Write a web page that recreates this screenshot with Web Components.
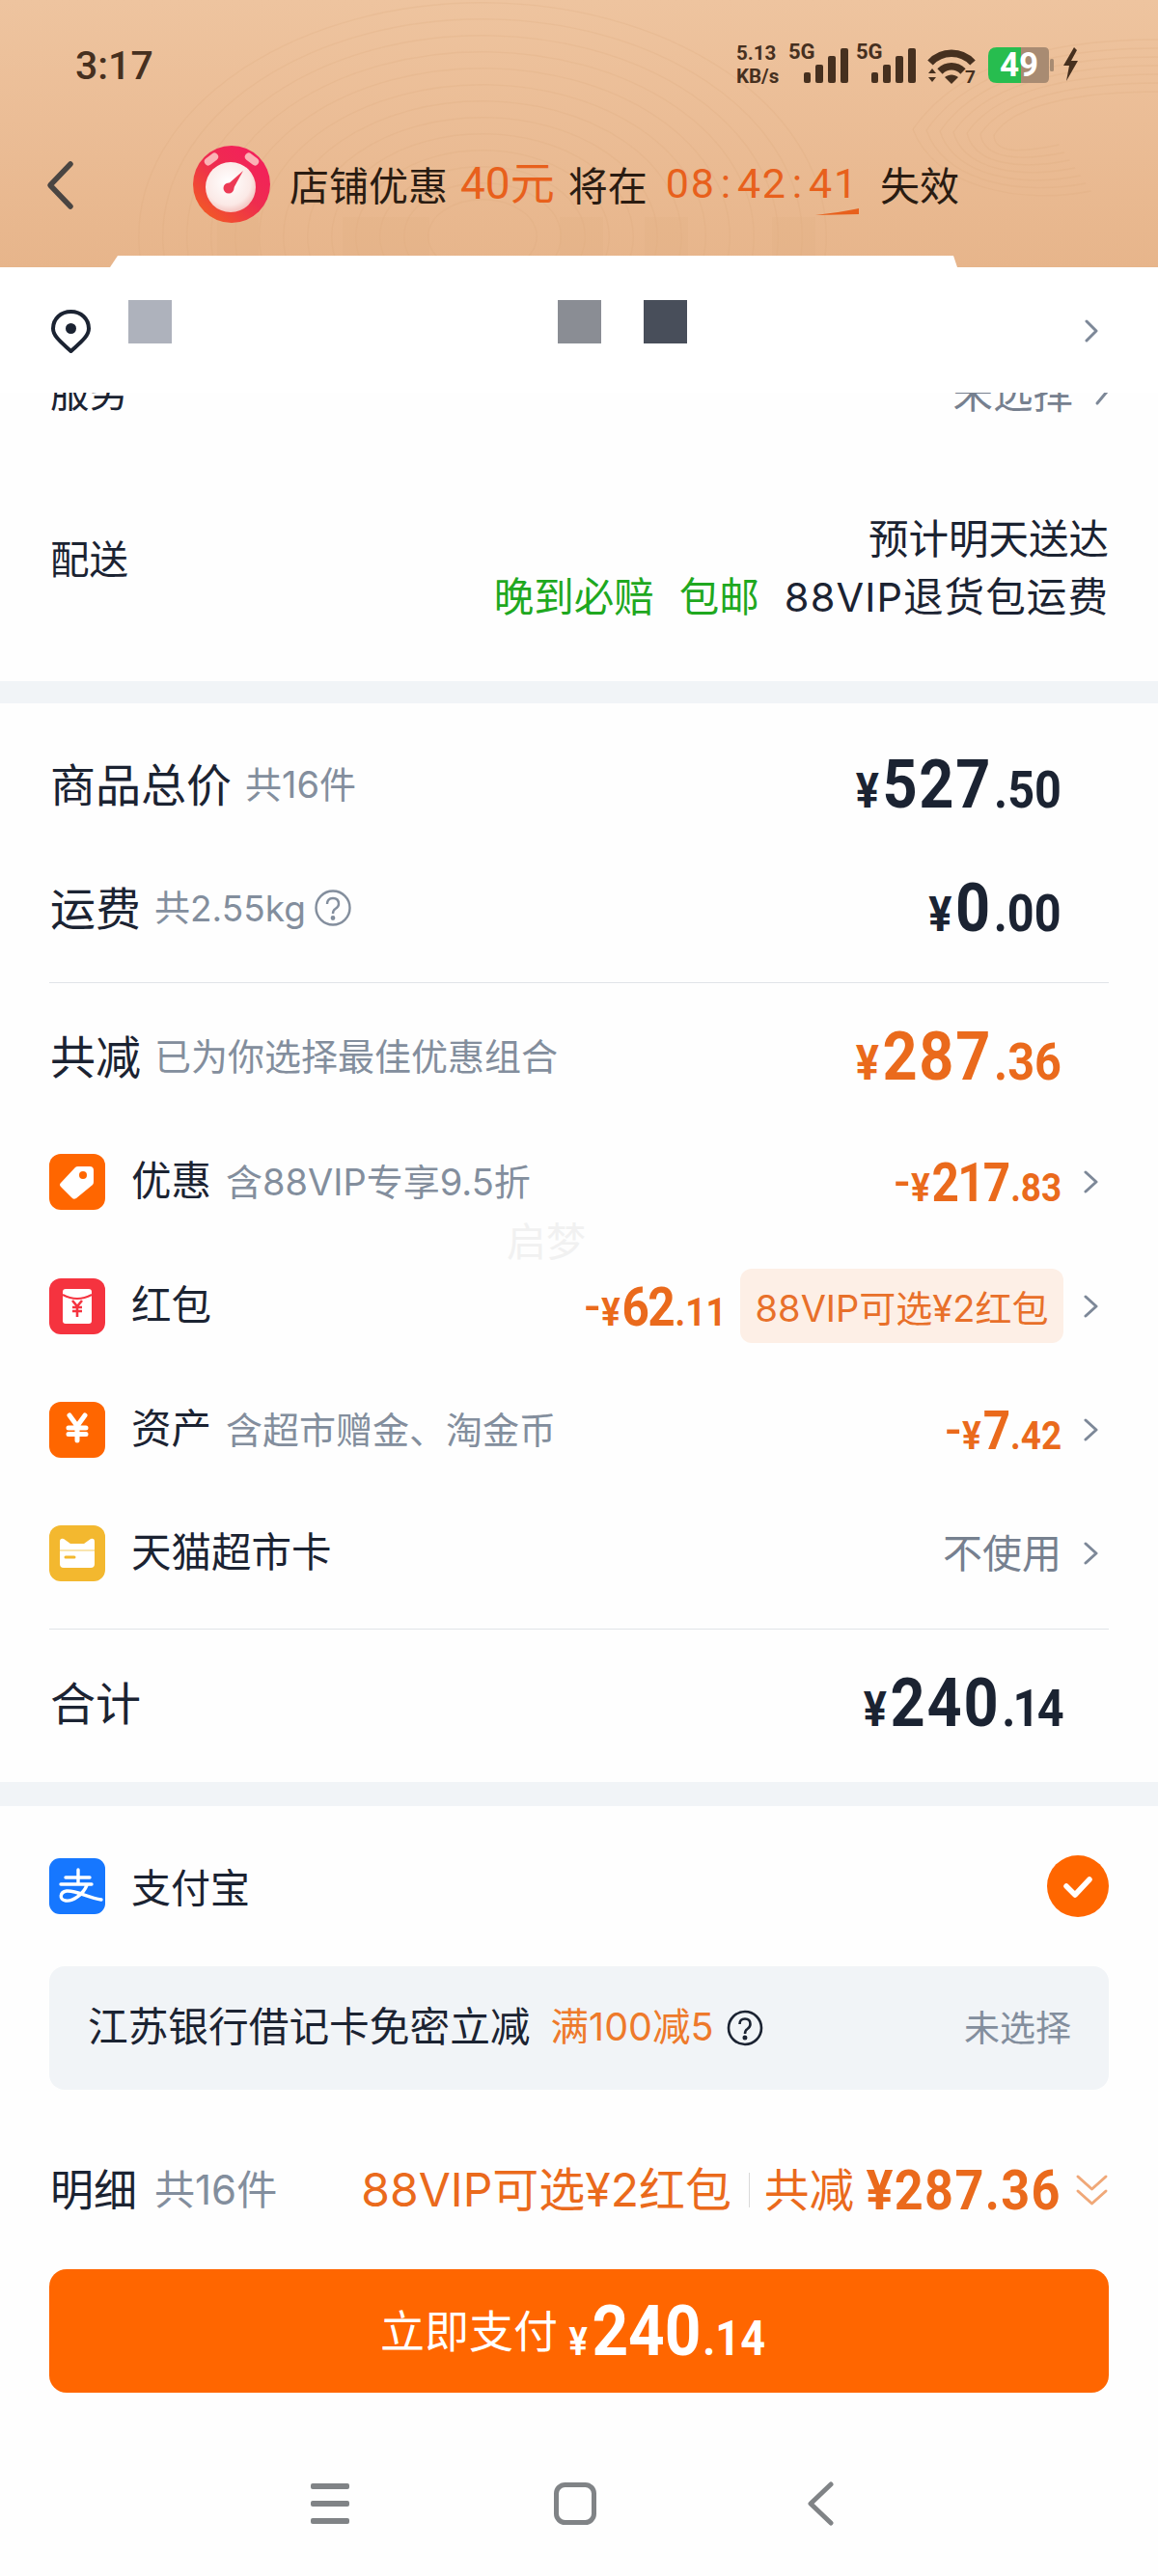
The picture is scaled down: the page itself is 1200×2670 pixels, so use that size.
<!DOCTYPE html>
<html lang="zh">
<head>
<meta charset="utf-8">
<title>确认订单</title>
<style>
  html, body { margin: 0; padding: 0; background: #fefefe; }
  body {
    width: 1200px;
    height: 2670px;
    overflow: hidden;
    font-family: Inter, "Noto Sans CJK SC", sans-serif;
    color: #1b2332;
    display: flex;
    flex-direction: column;
  }
</style>
</head>
<body>
  <top-header></top-header>
  <address-bar></address-bar>
  <delivery-section></delivery-section>
  <gap-band></gap-band>

  <price-section>
    <fee-row label="商品总价" sub="共16件" big>
      <money-amount sym="¥" int="527" dec=".50" size="lg" slot="value"></money-amount>
    </fee-row>
    <fee-row label="运费" sub="共2.55kg" subsize="37" help>
      <money-amount sym="¥" int="0" dec=".00" size="lg" slot="value"></money-amount>
    </fee-row>
    <hr-line style="margin:13px 0 12px"></hr-line>
    <fee-row label="共减" sub="已为你选择最佳优惠组合" style="margin-bottom:2px">
      <money-amount sym="¥" int="287" dec=".36" size="lg" orange slot="value"></money-amount>
    </fee-row>
    <fee-row label="优惠" sub="含88VIP专享9.5折" arrow icon="tag">
      <money-amount minus sym="¥" int="217" dec=".83" size="md" orange slot="value"></money-amount>
    </fee-row>
    <fee-row label="红包" arrow icon="packet" style="margin-top:1px">
      <money-amount minus sym="¥" int="62" dec=".11" size="md" orange slot="value"></money-amount>
      <vip-tag slot="value">88VIP可选¥2红包</vip-tag>
    </fee-row>
    <fee-row label="资产" sub="含超市赠金、淘金币" arrow icon="asset">
      <money-amount minus sym="¥" int="7" dec=".42" size="md" orange slot="value"></money-amount>
    </fee-row>
    <fee-row label="天猫超市卡" arrow icon="card">
      <span slot="value" style="font-size:41px;color:#76808f;line-height:1">不使用</span>
    </fee-row>
    <hr-line style="margin:14px 0 12px"></hr-line>
    <fee-row label="合计" big>
      <money-amount sym="¥" int="240" dec=".14" size="lg" tight slot="value"></money-amount>
    </fee-row>
  </price-section>

  <gap-band style="height:25px"></gap-band>

  <pay-option></pay-option>
  <bank-offer></bank-offer>
  <detail-bar></detail-bar>
  <pay-button></pay-button>
  <nav-keys></nav-keys>

<script>
const NUM_FONT = 'Roboto, sans-serif';

class TopHeader extends HTMLElement {
  constructor() {
    super();
    this.attachShadow({ mode: "open" });
  }

  connectedCallback() {
    const bars = (x) => `
      <rect x="${x}" y="25" width="7" height="11" rx="2"/>
      <rect x="${x + 12}" y="17" width="8" height="19" rx="2"/>
      <rect x="${x + 25}" y="8" width="8" height="28" rx="2"/>
      <rect x="${x + 38}" y="0" width="8" height="36" rx="2"/>`;

    // faint concentric lines of the header art
    let rings = "";
    for (let i = 0; i < 13; i++) {
      const r = 45 + i * 20;
      rings += `<ellipse cx="500" cy="245" rx="${r * 1.25}" ry="${r * 0.85}"/>`;
    }
    for (let i = 0; i < 7; i++) {
      const r = 30 + i * 22;
      rings += `<path d="M1200 ${95 - i * 9}C${1120 - i * 8} ${95 - i * 9} ${1050 - i * 10} ${108 - i * 6} ${1030 - i * 14} ${140 - i}"/>`;
      rings += `<path d="M${1030 - i * 14} ${140 - i}C${1030 - i * 10} ${160 + i * 6} ${1060} ${158 + i * 9} ${1090 + r / 4} ${150 + i * 8}"/>`;
    }

    this.shadowRoot.innerHTML = `
      <style>
        :host {
          display: block;
          position: relative;
          height: 277px;
          background: linear-gradient(180deg, #eec49f 0%, #ebbd96 45%, #e7b58b 100%);
          overflow: hidden;
          color: #46301f;
        }
        .rings { position: absolute; left: 0; top: 0; }
        .status {
          position: relative;
          height: 136px;
          display: flex;
          align-items: center;
          padding: 0 82px 0 78px;
          box-sizing: border-box;
          justify-content: space-between;
        }
        .time { font: 500 41px/1 Roboto, sans-serif; }
        .icons { display: flex; align-items: flex-start; height: 38px; }
        .speed {
          font: 700 20.500px/24px Roboto, sans-serif;
          width: 54px;
          margin-top: -6px;
        }
        .speed div { height: 24px; }
        .sig { position: relative; width: 70px; height: 38px; }
        .sig b {
          position: absolute;
          left: 0;
          top: -5px;
          font: 700 22px/20px Roboto, sans-serif;
        }
        .sig svg { position: absolute; left: 16px; top: 1px; }
        .wifi { position: relative; width: 50px; height: 38px; margin-left: 4px; }
        .wifi b {
          position: absolute;
          right: 0;
          bottom: -1px;
          font: 700 19px/17px Roboto, sans-serif;
        }
        .batt {
          position: relative;
          width: 68px;
          height: 37px;
          margin-left: 13px;
          font: 700 35px/37px Roboto, sans-serif;
          color: #fff;
          text-align: center;
        }
        .batt svg { position: absolute; left: 0; top: 0; }
        .batt span { position: relative; margin-left: -4px; }
        .bolt { margin-left: 9px; }
        .title {
          position: relative;
          height: 108px;
          display: flex;
          align-items: center;
          font-size: 41px;
          color: #2a1c12;
        }
        .back { position: absolute; left: 46px; top: 30px; }
        .clock { position: absolute; left: 199px; top: 14px; }
        .words {
          margin-left: 300px;
          display: flex;
          align-items: center;
          white-space: nowrap;
          line-height: 1;
          font-family: "Noto Sans CJK SC", sans-serif;
        }
        .o { color: #e8601c; }
        .off { font-size: 46px; font-family: Roboto, "Noto Sans CJK SC", sans-serif; }
        .cd { font-family: Roboto, sans-serif; font-size: 43px; letter-spacing: 1.800px; }
        .cd i { font-style: normal; margin: 0 5px; }
        .swoosh { position: absolute; left: 845px; top: 80px; }
        .bump {
          position: absolute;
          left: 114px;
          top: 265px;
          width: 878px;
          height: 12px;
          background: #fff;
          clip-path: polygon(8px 0, calc(100% - 4px) 0, 100% 100%, 0 100%);
        }
      </style>
      <svg class="rings" width="1200" height="277" fill="none" stroke="#dca97d" stroke-opacity=".22" stroke-width="1.300">
        ${rings}
        <g fill="#e3ad80" fill-opacity=".2" stroke="none">
          <rect x="225" y="225" width="43" height="40"/>
          <rect x="355" y="225" width="90" height="40"/>
          <rect x="580" y="225" width="45" height="40"/>
          <rect x="668" y="225" width="45" height="40"/>
          <rect x="800" y="225" width="45" height="40"/>
        </g>
      </svg>
      <div class="status">
        <span class="time">3:17</span>
        <div class="icons">
          <div class="speed"><div>5.13</div><div>KB/s</div></div>
          <div class="sig"><b>5G</b>
            <svg width="48" height="37" fill="#46301f">${bars(0)}</svg>
          </div>
          <div class="sig"><b>5G</b>
            <svg width="48" height="37" fill="#46301f">${bars(0)}</svg>
          </div>
          <div class="wifi">
            <svg width="50" height="38" viewBox="0 0 50 38" fill="none" stroke="#46301f" stroke-width="7.500">
              <path d="M3 16C15 3 35 3 47 16"/>
              <path d="M13 25C20 18 30 18 37 25"/>
              <path d="M18 31L25 38L32 31C28 27.500 22 27.500 18 31Z" fill="#46301f" stroke="none"/>
              <path d="M1 27L5 22L9 27ZM1 31L5 36L9 31Z" fill="#46301f" stroke="none"/>
            </svg>
            <b>7</b>
          </div>
          <div class="batt">
            <svg width="68" height="37" viewBox="0 0 68 37">
              <path d="M34 0H58Q63 0 63 5V32Q63 37 58 37H34Z" fill="#a88b72"/>
              <rect x="64" y="12" width="4" height="13" rx="1.500" fill="#a88b72"/>
              <path d="M34 0H9Q0 0 0 9V28Q0 37 9 37H34Z" fill="#27bd4f"/>
            </svg>
            <span>49</span>
          </div>
          <svg class="bolt" width="17" height="35" viewBox="0 0 17 35" fill="#46301f">
            <path d="M12 0L1 19H7L4 35L16 14H9L15 3Z"/>
          </svg>
        </div>
      </div>
      <div class="title">
        <svg class="back" width="32" height="52" viewBox="0 0 32 52" fill="none" stroke="#4a4542" stroke-width="5.500" stroke-linecap="round" stroke-linejoin="round">
          <path d="M27 4L6 26L27 48"/>
        </svg>
        <svg class="clock" width="82" height="82" viewBox="0 0 82 82">
          <defs>
            <linearGradient id="cg" x1="0.1" y1="1" x2="0.9" y2="0.1">
              <stop offset="0" stop-color="#f2601f"/><stop offset=".55" stop-color="#ee2c4f"/><stop offset="1" stop-color="#f41f5c"/>
            </linearGradient>
            <radialGradient id="cf" cx=".45" cy=".4" r=".65">
              <stop offset="0" stop-color="#fff"/><stop offset=".7" stop-color="#fbe9e6"/><stop offset="1" stop-color="#f1b9b4"/>
            </radialGradient>
          </defs>
          <circle cx="41" cy="41" r="40" fill="url(#cg)"/>
          <rect x="12" y="11" width="16" height="8" rx="4" transform="rotate(-38 20 15)" fill="#fbb2b5"/>
          <rect x="54" y="11" width="16" height="8" rx="4" transform="rotate(38 62 15)" fill="#fbb2b5"/>
          <circle cx="40" cy="44" r="26" fill="url(#cf)"/>
          <path d="M36 42L53 27L42 47Z" fill="#ec3a55"/>
          <circle cx="38" cy="45" r="5.500" fill="#ec3a55"/>
        </svg>
        <div class="words">
          <span>店铺优惠</span>
          <span class="o off" style="margin:0 14px 0 13px">40元</span>
          <span>将在</span>
          <span class="o cd" style="margin:0 22px 0 19px">08<i>:</i>42<i>:</i>41</span>
          <span>失效</span>
        </div>
        <svg class="swoosh" width="46" height="7"><path d="M0 7C15 5 32 3 45 0V6Z" fill="#e8601c"/></svg>
      </div>
      <div class="bump"></div>
    `;
  }
}

class AddressBar extends HTMLElement {
  constructor() {
    super();
    this.attachShadow({ mode: "open" });
  }

  connectedCallback() {
    this.shadowRoot.innerHTML = `
      <style>
        :host {
          display: flex;
          position: relative;
          z-index: 1;
          height: 130px;
          background: #fff;
          align-items: center;
          padding: 0 51px 0 53px;
          box-sizing: border-box;
        }
        .pin { width: 41px; flex: none; margin-top: 3px; }
        .mask { display: flex; margin-left: 39px; margin-top: -18px; width: 950px; }
        .mask span { width: 45px; height: 45px; display: block; }
        .arrow { margin-left: auto; margin-right: 11px; margin-top: 2px; }
      </style>
      <svg class="pin" width="41" height="46" viewBox="0 0 41 46" fill="none">
        <path d="M20.500 43C12 35 2 28 2 19.500C2 9.500 10 2 20.500 2S39 9.500 39 19.500C39 28 29 35 20.500 43Z" stroke="#1b2332" stroke-width="4" stroke-linejoin="round"/>
        <circle cx="20.500" cy="19.500" r="5.500" fill="#1b2332"/>
      </svg>
      <div class="mask">
        <span style="background:#aeb2bc"></span>
        <span style="background:#8a8d94;margin-left:400px"></span>
        <span style="background:#484e5a;margin-left:44px"></span>
      </div>
      <svg class="arrow" width="14" height="26" viewBox="0 0 14 26" fill="none" stroke="#7d8898" stroke-width="3" stroke-linecap="round" stroke-linejoin="round">
        <path d="M2 3L12 13L2 23"/>
      </svg>
    `;
  }
}

class DeliverySection extends HTMLElement {
  constructor() {
    super();
    this.attachShadow({ mode: "open" });
  }

  connectedCallback() {
    this.shadowRoot.innerHTML = `
      <style>
        :host { display: block; margin-top: -19px; font-size: 40.500px; }
        .service {
          height: 40px;
          display: flex;
          justify-content: space-between;
          align-items: center;
          line-height: 40px;
          padding: 0 50px 0 52px;
        }
        .service span:last-child { color: #76808f; display: flex; align-items: center; gap: 22px; font-size: 41.500px; }
        .ship {
          height: 278px;
          box-sizing: border-box;
          padding: 101px 51px 0 52px;
          display: flex;
          justify-content: space-between;
          align-items: flex-start;
        }
        .label { line-height: 60px; margin-top: 22px; }
        .info { text-align: right; line-height: 60px; font-size: 41.500px; }
        .green { color: #1fa81f; }
        .green + .green { margin-left: 26px; }
        .rest { margin-left: 26px; letter-spacing: 1.100px; }
      </style>
      <div class="service">
        <span>服务</span>
        <span>未选择
          <svg width="16" height="28" viewBox="0 0 16 28" fill="none" stroke="#7d8898" stroke-width="3" stroke-linecap="round" stroke-linejoin="round">
            <path d="M3 3L13 12L3 24"/>
          </svg>
        </span>
      </div>
      <div class="ship">
        <div class="label">配送</div>
        <div class="info">
          <div>预计明天送达</div>
          <div><span class="green">晚到必赔</span><span class="green">包邮</span><span class="rest">88VIP退货包运费</span></div>
        </div>
      </div>
    `;
  }
}

class GapBand extends HTMLElement {
  constructor() {
    super();
    this.attachShadow({ mode: "open" });
    this.shadowRoot.innerHTML = `<style>:host { display: block; height: 23px; background: #f1f4f7; }</style>`;
  }
}

class PriceSection extends HTMLElement {
  constructor() {
    super();
    this.attachShadow({ mode: "open" });
    this.shadowRoot.innerHTML = `
      <style>
        :host {
          display: block;
          position: relative;
          height: 1118px;
          box-sizing: border-box;
          padding: 20px 51px 18px;
        }
        .mark {
          position: absolute;
          left: 525px;
          top: 525px;
          font-size: 41px;
          color: #f1f1f1;
        }
      </style>
      <slot></slot>
      <span class="mark">启梦</span>
    `;
  }
}

class HrLine extends HTMLElement {
  constructor() {
    super();
    this.attachShadow({ mode: "open" });
    this.shadowRoot.innerHTML = `<style>:host { display: block; height: 1px; background: #e1e4e8; }</style>`;
  }
}

const ROW_ICONS = {
  tag: `<rect width="58" height="58" rx="12" fill="#ff6600"/>
    <path d="M12 30L27 14Q28 13 30 13H42Q46 13 46 17V29Q46 31 45 32L28 46Q25 48 23 45L12 34Q10 32 12 30Z" fill="#fff"/>
    <circle cx="35" cy="22" r="4" fill="#ff6600"/>`,
  packet: `<rect width="58" height="58" rx="12" fill="#f5333f"/>
    <rect x="14" y="11" width="30" height="36" rx="3" fill="#fff"/>
    <path d="M14 17Q29 25 44 17" fill="none" stroke="#f5333f" stroke-width="2"/>
    <path d="M24 23L29 29L34 23M29 29V40M24 30H34M24 34H34" fill="none" stroke="#f5333f" stroke-width="2.600"/>`,
  asset: `<rect width="58" height="58" rx="12" fill="#ff6600"/>
    <path d="M21 14L29 25L37 14M29 25V40M20 27H38M20 33.500H38" fill="none" stroke="#fff" stroke-width="5" stroke-linecap="round" stroke-linejoin="round"/>`,
  card: `<rect width="58" height="58" rx="12" fill="#f3b82f"/>
    <path d="M11 17Q11 13 15 14L22 19H36L43 14Q47 13 47 17V40Q47 44 43 44H15Q11 44 11 40Z" fill="#fff"/>
    <path d="M11 26H47" stroke="#f8dc94" stroke-width="1.500"/>
    <path d="M17 33H26" stroke="#f3b82f" stroke-width="3" stroke-linecap="round"/>`
};

class FeeRow extends HTMLElement {
  constructor() {
    super();
    this.attachShadow({ mode: "open" });
  }

  connectedCallback() {
    const label = this.getAttribute("label") || "";
    const sub = this.getAttribute("sub") || "";
    const subSize = this.getAttribute("subsize") || 38;
    const icon = this.getAttribute("icon");
    const big = this.hasAttribute("big") || !icon;
    const help = this.hasAttribute("help");
    const arrow = this.hasAttribute("arrow");

    this.shadowRoot.innerHTML = `
      <style>
        :host {
          display: flex;
          align-items: center;
          height: 128px;
          white-space: nowrap;
        }
        .icon { flex: none; margin-right: 27px; display: block; }
        .label { font-size: ${big ? 47 : 41.5}px; line-height: 1; margin-left: ${icon ? 0 : 1}px; }
        .sub {
          font-size: ${subSize}px;
          line-height: 1;
          color: #838e9d;
          margin-left: ${icon ? 15 : 14}px;
          display: flex;
          align-items: center;
          gap: 8px;
        }
        .value {
          margin-left: auto;
          display: flex;
          align-items: center;
          gap: 14px;
        }
        .end { width: 49px; flex: none; padding-left: 23px; box-sizing: border-box; display: flex; }
      </style>
      ${icon ? `<svg class="icon" width="58" height="58" viewBox="0 0 58 58">${ROW_ICONS[icon]}</svg>` : ""}
      <span class="label">${label}</span>
      ${sub ? `<span class="sub">${sub}${help ? `
        <svg width="40" height="40" viewBox="0 0 40 40" fill="none" stroke="#838e9d" stroke-width="2.400">
          <circle cx="20" cy="20" r="17.500"/>
          <path d="M14 16Q14 10 20 10T26 16Q26 19 22.500 21Q20 22.500 20 26"/>
          <circle cx="20" cy="30.500" r="1.200" fill="#838e9d"/>
        </svg>` : ""}</span>` : ""}
      <div class="value"><slot name="value"></slot></div>
      <div class="end">${arrow ? `
        <svg width="16" height="26" viewBox="0 0 16 26" fill="none" stroke="#7d8898" stroke-width="3" stroke-linecap="round" stroke-linejoin="round">
          <path d="M2 3L13 13L2 23"/>
        </svg>` : ""}</div>
    `;
  }
}

class MoneyAmount extends HTMLElement {
  constructor() {
    super();
    this.attachShadow({ mode: "open" });
  }

  connectedCallback() {
    const sizes = {
      lg: { int: 70, dec: 54, sym: 50, ls: 2, gap: 4 },
      md: { int: 55, dec: 41, sym: 41, ls: -2, gap: 2 },
      xl: { int: 73, dec: 50, sym: 40, ls: 0, gap: 5 }
    };
    const s = sizes[this.getAttribute("size") || "lg"];
    const color = this.hasAttribute("orange") ? "#ea6a1c" : this.hasAttribute("white") ? "#fff" : "#1b2332";
    const minus = this.hasAttribute("minus") ? `<span class="minus">-</span>` : "";
    const decSpacing = this.hasAttribute("tight") ? -3 : 0;

    this.shadowRoot.innerHTML = `
      <style>
        :host {
          display: inline-flex;
          align-items: baseline;
          font-family: ${NUM_FONT};
          font-weight: 700;
          color: ${color};
          line-height: 1;
          white-space: nowrap;
          transform: scaleX(.9);
          transform-origin: right center;
        }
        .minus { font-size: 60px; font-weight: 400; margin-right: 2px; }
        .sym { font-size: ${s.sym}px; margin-right: ${s.gap}px; }
        .int { font-size: ${s.int}px; letter-spacing: ${s.ls}px; }
        .dec { font-size: ${s.dec}px; margin-left: 2px; letter-spacing: ${decSpacing}px; }
      </style>
      ${minus}<span class="sym">${this.getAttribute("sym") || "¥"}</span><span class="int">${this.getAttribute("int")}</span><span class="dec">${this.getAttribute("dec")}</span>
    `;
  }
}

class VipTag extends HTMLElement {
  constructor() {
    super();
    this.attachShadow({ mode: "open" });
    this.shadowRoot.innerHTML = `
      <style>
        :host {
          display: flex;
          align-items: center;
          justify-content: center;
          height: 77px;
          width: 335px;
          margin-right: -2px;
          margin-top: -2px;
          box-sizing: border-box;
          border-radius: 12px;
          background: #fdefe6;
          color: #e8702a;
          font-size: 38px;
          white-space: nowrap;
        }
      </style>
      <slot></slot>
    `;
  }
}

class PayOption extends HTMLElement {
  constructor() {
    super();
    this.attachShadow({ mode: "open" });
    this.shadowRoot.innerHTML = `
      <style>
        :host {
          display: flex;
          align-items: center;
          height: 64px;
          margin: 51px 51px 0;
          font-size: 41px;
        }
        .logo { flex: none; margin-right: 27px; }
        .name { margin-top: -3px; }
        .check { margin-left: auto; }
      </style>
      <svg class="logo" width="58" height="58" viewBox="0 0 58 58">
        <rect width="58" height="58" rx="11" fill="#1677ff"/>
        <path d="M17 20H42M30 12V27M12 27H44M39 28C35 38 24 45 17 44C10 43 11 35 18 34C28 33 40 41 54 43" fill="none" stroke="#fff" stroke-width="3.400" stroke-linecap="round"/>
      </svg>
      <span class="name">支付宝</span>
      <svg class="check" width="64" height="64" viewBox="0 0 64 64">
        <circle cx="32" cy="32" r="32" fill="#ff6600"/>
        <path d="M20 32L29 41L44 25" fill="none" stroke="#fff" stroke-width="5.500" stroke-linecap="round" stroke-linejoin="round"/>
      </svg>
    `;
  }
}

class BankOffer extends HTMLElement {
  constructor() {
    super();
    this.attachShadow({ mode: "open" });
    this.shadowRoot.innerHTML = `
      <style>
        :host {
          display: flex;
          align-items: center;
          height: 128px;
          margin: 51px 51px 0;
          padding: 0 39px 0 40px;
          box-sizing: border-box;
          background: #f1f4f7;
          border-radius: 16px;
          white-space: nowrap;
        }
        .name { font-size: 41.700px; line-height: 1; }
        .cut { font-size: 39.500px; line-height: 1; color: #ee7a2b; margin-left: 21px; }
        svg { margin-left: 14px; }
        .state { margin-left: auto; font-size: 37px; line-height: 1; color: #838e9d; }
      </style>
      <span class="name">江苏银行借记卡免密立减</span>
      <span class="cut">满100减5</span>
      <svg width="38" height="38" viewBox="0 0 38 38" fill="none" stroke="#1b2332" stroke-width="2.600">
        <circle cx="19" cy="19" r="17"/>
        <path d="M13.500 15Q13.500 9.500 19 9.500T24.500 15Q24.500 18 21.500 20Q19 21.500 19 25"/>
        <circle cx="19" cy="29" r="1.200" fill="#1b2332"/>
      </svg>
      <span class="state">未选择</span>
    `;
  }
}

class DetailBar extends HTMLElement {
  constructor() {
    super();
    this.attachShadow({ mode: "open" });
    this.shadowRoot.innerHTML = `
      <style>
        :host {
          display: flex;
          align-items: center;
          height: 70px;
          margin: 69px 51px 0;
          white-space: nowrap;
        }
        .label { font-size: 45px; line-height: 1; margin-left: 1px; }
        .sub { font-size: 42px; line-height: 1; color: #838e9d; margin-left: 18px; }
        .tip { margin-left: auto; font-size: 48px; line-height: 1; color: #ea6a1c; }
        .sep { width: 1px; height: 36px; background: #d9d9d9; margin: 0 15px 0 18px; }
        .less { font-size: 46.500px; line-height: 1; color: #ea6a1c; margin-right: 12px; }
        .sum { width: 203px; display: flex; justify-content: flex-end; }
        .sum span {
          flex: none;
          font: 700 58px/1 ${NUM_FONT};
          color: #ea6a1c;
          letter-spacing: 1.500px;
          transform: scaleX(.9);
          transform-origin: right center;
        }
        .chev { margin-left: 14px; }
      </style>
      <span class="label">明细</span>
      <span class="sub">共16件</span>
      <span class="tip">88VIP可选¥2红包</span>
      <span class="sep"></span>
      <span class="less">共减</span>
      <span class="sum"><span>¥287.36</span></span>
      <svg class="chev" width="35" height="36" viewBox="0 0 35 36" fill="none" stroke="#f0a878" stroke-width="3" stroke-linecap="round" stroke-linejoin="round">
        <path d="M3 4L17.500 17L32 4M3 19L17.500 32L32 19"/>
      </svg>
    `;
  }
}

class PayButton extends HTMLElement {
  constructor() {
    super();
    this.attachShadow({ mode: "open" });
    this.shadowRoot.innerHTML = `
      <style>
        :host {
          display: flex;
          align-items: center;
          height: 128px;
          margin: 47px 51px 0;
          padding-left: 343px;
          background: #ff6600;
          border-radius: 18px;
          color: #fff;
        }
        span { font-size: 46px; line-height: 1; flex: none; width: 198px; }
        .amount { width: 201px; display: flex; justify-content: flex-end; flex: none; }
        money-amount { flex: none; }
      </style>
      <span>立即支付</span>
      <div class="amount"><money-amount white sym="¥" int="240" dec=".14" size="xl"></money-amount></div>
    `;
  }
}

class NavKeys extends HTMLElement {
  constructor() {
    super();
    this.attachShadow({ mode: "open" });
    this.shadowRoot.innerHTML = `
      <style>
        :host {
          display: flex;
          align-items: center;
          height: 60px;
          margin-top: 85px;
          padding-left: 322px;
        }
        .home { margin-left: 212px; }
        .back { margin-left: 218px; }
      </style>
      <svg width="40" height="42" viewBox="0 0 40 42" fill="#808386">
        <rect y="0" width="40" height="6" rx="2"/>
        <rect y="18" width="40" height="6" rx="2"/>
        <rect y="36" width="40" height="6" rx="2"/>
      </svg>
      <svg class="home" width="44" height="44" viewBox="0 0 44 44" fill="none" stroke="#808386" stroke-width="5">
        <rect x="2.500" y="2.500" width="39" height="39" rx="9"/>
      </svg>
      <svg class="back" width="28" height="46" viewBox="0 0 28 46" fill="none" stroke="#808386" stroke-width="5" stroke-linecap="round" stroke-linejoin="round">
        <path d="M25 3L4 23L25 43"/>
      </svg>
    `;
  }
}

customElements.define("money-amount", MoneyAmount);
customElements.define("top-header", TopHeader);
customElements.define("address-bar", AddressBar);
customElements.define("delivery-section", DeliverySection);
customElements.define("gap-band", GapBand);
customElements.define("price-section", PriceSection);
customElements.define("hr-line", HrLine);
customElements.define("fee-row", FeeRow);
customElements.define("vip-tag", VipTag);
customElements.define("pay-option", PayOption);
customElements.define("bank-offer", BankOffer);
customElements.define("detail-bar", DetailBar);
customElements.define("pay-button", PayButton);
customElements.define("nav-keys", NavKeys);
</script>
</body>
</html>
